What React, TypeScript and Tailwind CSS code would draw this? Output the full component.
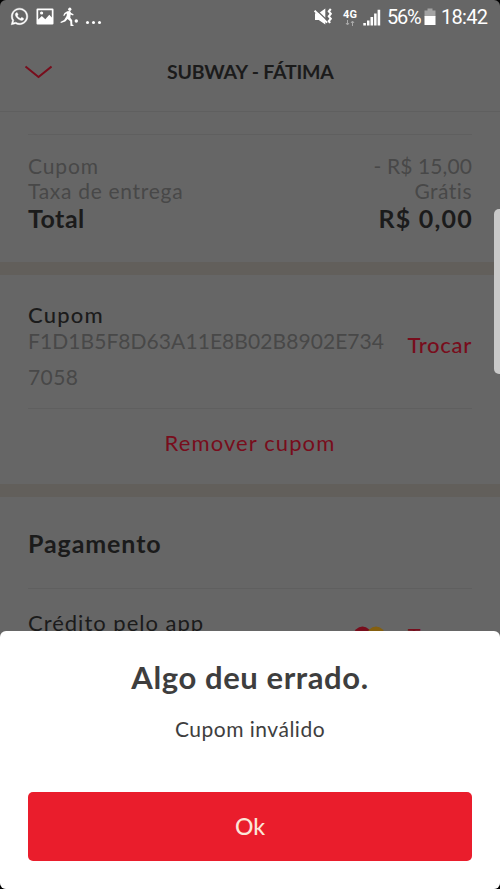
import { FaWhatsapp } from "react-icons/fa";

function ImageIcon() {
  return (
    <svg width="18" height="17" viewBox="0 0 18 17">
      <path
        fill="#fff"
        fillRule="evenodd"
        d="M1.5.5h15a1 1 0 0 1 1 1v14a1 1 0 0 1-1 1h-15a1 1 0 0 1-1-1v-14a1 1 0 0 1 1-1ZM2.2 2.2v9.3l3.6-3.6 3.5 3.3 4-4.4 2.5 2.6V2.2ZM4 5a1.6 1.6 0 1 1 3.2 0A1.6 1.6 0 0 1 4 5Z"
      />
    </svg>
  );
}

function SoccerIcon() {
  return (
    <svg width="20" height="20" viewBox="0 0 20 20" fill="#fff">
      <ellipse cx="9.8" cy="2.2" rx="1.6" ry="1.8" />
      <path d="M7.2 4.2 10 4l1.2 2 2.4 1.3-.5 1.1-2.5-.9-.3 3.3 1.9 2.5.1 4.1 1.2.7v.9h-3l-.3-4.8-2.6-2.1-2.3 2.3-4.4 1.7-.5-1 3.7-2.1L6.6 9l.3-2.5-1.3.4-1.4 2.2-1-.5 1.3-2.7Z" />
      <circle cx="16.3" cy="14" r="1.7" />
    </svg>
  );
}

function MuteVibrateIcon() {
  return (
    <svg width="19" height="18" viewBox="0 0 19 18" fill="none">
      <path d="M1 5.2h3.7L11.3.6v16l-6.6-4.7H1Z" fill="#fff" />
      <path d="m1.8 1.6 12 11.5" stroke="#666" strokeWidth="1.4" />
      <path d="m.6 2.6 12.5 12" stroke="#fff" strokeWidth="2" />
      <path d="m16.8 1-2 2.3 2 2.5-2 2.5 2 2.5-2 2.3 1.2 1.9" stroke="#fff" strokeWidth="2.1" />
    </svg>
  );
}

function SignalIcon() {
  return (
    <svg width="18" height="17" viewBox="0 0 18 17" fill="#fff">
      <path d="M.3 14h2.6v2.5H.3ZM4 11.5h2.5v5H4ZM7.5 8h2.6v8.5H7.5ZM11.1 4.4h2.5v12.1h-2.5ZM14.6.7h2.6v15.8h-2.6Z" />
    </svg>
  );
}

function BatteryIcon() {
  return (
    <svg width="12" height="18" viewBox="0 0 12 18">
      <path d="M3.5.5h5v2h3v6H.5v-6h3Z" fill="#a3a3a3" />
      <path d="M.5 8h11v9H.5Z" fill="#fff" />
    </svg>
  );
}

function StatusBar() {
  return (
    <div className="flex h-8 items-center pt-0.5 pr-3 pl-2.5 font-[Roboto,sans-serif] text-white">
      <FaWhatsapp className="mb-0.5 size-[19px] stroke-white stroke-[12px]" />
      <div className="mb-0.5 ml-[7px]">
        <ImageIcon />
      </div>
      <div className="ml-[6px]">
        <SoccerIcon />
      </div>
      <div className="mt-[11px] ml-[6px] flex gap-[3px]">
        <span className="size-[3px] rounded-full bg-white" />
        <span className="size-[3px] rounded-full bg-white" />
        <span className="size-[3px] rounded-full bg-white" />
      </div>
      <div className="ml-auto flex items-center">
        <MuteVibrateIcon />
        <div className="mt-px ml-[9px] flex w-[16px] flex-col items-center">
          <span className="text-[11px] leading-[10px] font-bold">4G</span>
          <svg width="10" height="6" viewBox="0 0 10 6" fill="none" stroke="#aaa">
            <path d="M2.5 0v4.5M1 3l1.5 2L4 3M7.5 6V1.5M6 3l1.5-2L9 3" />
          </svg>
        </div>
        <div className="ml-[5px]">
          <SignalIcon />
        </div>
        <span className="ml-[6px] w-[34px] text-[20px] tracking-[-1.3px]">56%</span>
        <div className="ml-[3px]">
          <BatteryIcon />
        </div>
        <span className="ml-[5px] w-[47px] text-[20px] tracking-[-0.7px]">18:42</span>
      </div>
    </div>
  );
}

function Header() {
  return (
    <header className="flex h-20 items-center justify-center border-b border-[#5f5f5f]">
      <svg width="28" height="14" viewBox="0 0 28 14" className="mr-[115px] ml-6" fill="none">
        <path d="m1.5 1.5 13 10.5 13-10.5" stroke="#780d1c" strokeWidth="2" />
      </svg>
      <h1 className="flex-1 text-[19.5px] leading-6 font-bold tracking-[-0.2px] whitespace-nowrap">SUBWAY - FÁTIMA</h1>
    </header>
  );
}

function Summary() {
  return (
    <section className="h-[150px] px-7 pt-[22px]">
      <div className="border-t border-[#5f5f5f] pt-[18px]">
        <div className="flex h-[25px] items-center justify-between text-[21px] text-[#484848]">
          <span className="tracking-[0.9px]">Cupom</span>
          <span className="tracking-[0.1px]">- R$ 15,00</span>
        </div>
        <div className="flex h-[25px] items-center justify-between text-[21px] text-[#484848]">
          <span className="tracking-[0.7px]">Taxa de entrega</span>
          <span className="tracking-[0.5px]">Grátis</span>
        </div>
        <div className="flex h-[31px] items-center justify-between text-[25px] font-bold">
          <span className="tracking-[0.5px]">Total</span>
          <span className="-mr-px tracking-[1.2px]">R$ 0,00</span>
        </div>
      </div>
    </section>
  );
}

function Coupon() {
  return (
    <section className="h-[209px] px-7 pt-[28px]">
      <div className="flex h-[105px] items-start justify-between">
        <div>
          <div className="h-6 text-[22px] leading-6 font-medium tracking-[1.2px]">Cupom</div>
          <div className="text-[21px] leading-9 text-[#484848]">
            <div className="-mt-1 tracking-[0.07px]">F1D1B5F8D63A11E8B02B8902E734</div>
            <div className="tracking-[0.4px]">7058</div>
          </div>
        </div>
        <span className="mt-[30px] text-[22px] leading-6 font-medium tracking-[0.7px] text-[#780d1c]">Trocar</span>
      </div>
      <div className="border-t border-[#5f5f5f] pt-[22px] text-center text-[22px] leading-6 tracking-[1.1px] text-[#780d1c]">
        Remover cupom
      </div>
    </section>
  );
}

function Payment() {
  return (
    <section className="h-[134px] overflow-hidden px-7">
      <h2 className="h-[91px] pt-[31px] text-[25px] leading-[30px] font-bold tracking-[0.9px]">Pagamento</h2>
      <div className="flex border-t border-[#5f5f5f] pt-[22px]">
        <span className="flex-1 text-[22px] leading-6 tracking-[1px]">Crédito pelo app</span>
        <svg width="32" height="20" viewBox="0 0 32 20" className="mt-[15px] mr-[22px]">
          <circle cx="8.5" cy="9.5" r="9" fill="#780d1c" />
          <circle cx="22" cy="9.5" r="9" fill="#85600f" />
        </svg>
        <span className="mt-[13px] text-[22px] leading-6 tracking-[0.7px] text-[#780d1c]">Trocar</span>
      </div>
    </section>
  );
}

function ErrorSheet() {
  return (
    <div className="flex h-[258px] flex-col items-center rounded-t-md bg-white px-7 pt-[28px] text-[#3e3e3e]">
      <h2 className="text-[31px] leading-9 font-bold tracking-[0.6px]">Algo deu errado.</h2>
      <p className="mt-[22px] text-[21px] leading-6 tracking-[0.5px]">Cupom inválido</p>
      <button className="mt-[51px] h-[69px] w-full rounded-[5px] bg-[#ea1d2c] text-[23px] font-medium text-[#fbe6d8]">
        Ok
      </button>
    </div>
  );
}

export default function App() {
  return (
    <div className="h-[889px] w-[500px] bg-black">
      <div className="relative h-full overflow-hidden rounded-md bg-[#666] font-[Lato,sans-serif] text-[#1b1b1b]">
        <StatusBar />
        <Header />
        <Summary />
        <div className="h-[13px] bg-[#625f5b]" />
        <Coupon />
        <div className="h-[13px] bg-[#625f5b]" />
        <Payment />
        <ErrorSheet />
        {/* edge panel handle */}
        <div className="absolute top-[209px] -right-1 h-[165px] w-[10px] rounded-[5px] bg-[#c9c9c9]" />
      </div>
    </div>
  );
}
